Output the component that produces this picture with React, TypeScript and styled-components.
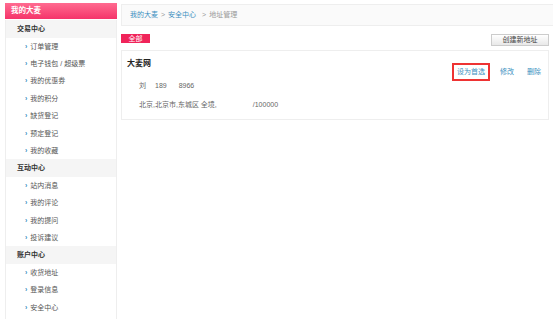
import styled, { createGlobalStyle } from "styled-components";

const GlobalStyle = createGlobalStyle`
  html, body {
    margin: 0;
    padding: 0;
    background: #fff;
  }
  body {
    font-family: "Liberation Sans", "Noto Sans CJK SC", sans-serif;
    font-size: 7px;
    color: #555;
  }
`;

const Page = styled.div`
  width: 553px;
  height: 319px;
  display: flex;
  gap: 4px;
  padding-left: 5px;
  box-sizing: border-box;
  overflow: hidden;
`;

const Sidebar = styled.div`
  width: 112px;
  flex-shrink: 0;
  padding-top: 3px;
  display: flex;
  flex-direction: column;
`;

const SideHeader = styled.div`
  height: 16px;
  line-height: 16px;
  padding-left: 6px;
  background: linear-gradient(180deg, #ff6b90 0%, #f5346a 100%);
  color: #fff;
  font-weight: bold;
  font-size: 7.5px;
  margin-bottom: 1.3px;
`;

const SideBody = styled.div`
  flex: 1;
  border-left: 1px solid #eee;
  border-right: 1px solid #eee;
`;

const GroupTitle = styled.div`
  height: 17.4px;
  line-height: 17.4px;
  padding-left: 11px;
  background: #f5f5f5;
  color: #333;
  font-weight: bold;
`;

const NavItem = styled.div`
  height: 17.4px;
  line-height: 17.4px;
  padding-left: 19px;
  color: #555;
  display: flex;
  align-items: center;
  gap: 3px;
`;

const Arrow = styled.span`
  color: #3a8fc0;
  font-weight: bold;
  font-size: 7px;
`;

const Main = styled.div`
  flex: 1;
  padding-top: 4px;
  padding-right: 4px;
  display: flex;
  flex-direction: column;
`;

const Crumbs = styled.div`
  height: 20px;
  line-height: 20px;
  margin-right: -6px;
  padding-left: 8px;
  background: #fafafa;
  border: 1px solid #eee;
  color: #999;
`;

const CrumbLink = styled.a`
  color: #3a8fc0;
  text-decoration: none;
`;

const Sep = styled.span<{ $wide?: boolean }>`
  color: #999;
  margin: 0 3px;
  margin-left: ${(p) => (p.$wide ? 6 : 3)}px;
`;

const TabBar = styled.div`
  display: flex;
  justify-content: space-between;
  align-items: flex-start;
  margin-top: 8px;
  height: 13px;
`;

const Tab = styled.div`
  width: 29px;
  height: 9px;
  line-height: 9px;
  background: #f0245a;
  color: #fff;
  text-align: center;
`;

const CreateButton = styled.div`
  width: 56px;
  height: 10px;
  line-height: 10px;
  text-align: center;
  border: 1px solid #ccc;
  background: linear-gradient(180deg, #fff 0%, #e8e8e8 100%);
  color: #444;
`;

const Card = styled.div`
  margin-top: 3px;
  height: 70px;
  border: 1px solid #eee;
  padding: 0 5px;
  box-sizing: border-box;
  display: flex;
  flex-direction: column;
`;

const CardHead = styled.div`
  display: flex;
  align-items: flex-start;
  justify-content: space-between;
  padding-top: 8px;
`;

const CardTitle = styled.div`
  font-weight: bold;
  color: #222;
  font-size: 8px;
  line-height: 10px;
`;

const Actions = styled.div`
  display: flex;
  align-items: center;
  gap: 13px;
  margin-top: 8px;
  margin-right: 2px;
`;

const Action = styled.a<{ $boxed?: boolean }>`
  color: #3a8fc0;
  text-decoration: none;
  line-height: 10px;
  ${(p) =>
    p.$boxed &&
    `
    outline: 2px solid #ee3333;
    outline-offset: 2px;
    padding: 0 1px;
    margin-right: 1px;
  `}
`;

const InfoLine = styled.div<{ $top: number }>`
  margin-top: ${(p) => p.$top}px;
  padding-left: 12px;
  color: #666;
  line-height: 10px;
  display: flex;
`;

const Gap = styled.span<{ $w: number }>`
  display: inline-block;
  width: ${(p) => p.$w}px;
`;

const groups: { title: string; items: string[] }[] = [
  {
    title: "交易中心",
    items: ["订单管理", "电子钱包 / 超级票", "我的优惠券", "我的积分", "缺货登记", "预定登记", "我的收藏"],
  },
  { title: "互动中心", items: ["站内消息", "我的评论", "我的提问", "投诉建议"] },
  { title: "账户中心", items: ["收货地址", "登录信息", "安全中心"] },
];

export default function App() {
  return (
    <>
      <GlobalStyle />
      <Page>
        <Sidebar>
          <SideHeader>我的大麦</SideHeader>
          <SideBody>
            {groups.map((g) => (
              <div key={g.title}>
                <GroupTitle>{g.title}</GroupTitle>
                {g.items.map((it) => (
                  <NavItem key={it}>
                    <Arrow>›</Arrow>
                    {it}
                  </NavItem>
                ))}
              </div>
            ))}
          </SideBody>
        </Sidebar>
        <Main>
          <Crumbs>
            <CrumbLink>我的大麦</CrumbLink>
            <Sep>&gt;</Sep>
            <CrumbLink>安全中心</CrumbLink>
            <Sep $wide>&gt;</Sep>
            地址管理
          </Crumbs>
          <TabBar>
            <Tab>全部</Tab>
            <CreateButton>创建新地址</CreateButton>
          </TabBar>
          <Card>
            <CardHead>
              <CardTitle>大麦网</CardTitle>
              <Actions>
                <Action $boxed>设为首选</Action>
                <Action>修改</Action>
                <Action>删除</Action>
              </Actions>
            </CardHead>
            <InfoLine $top={4}>
              刘<Gap $w={9} />189<Gap $w={12} />8966
            </InfoLine>
            <InfoLine $top={9}>
              北京,北京市,东城区 全境,<Gap $w={36} />/100000
            </InfoLine>
          </Card>
        </Main>
      </Page>
    </>
  );
}
